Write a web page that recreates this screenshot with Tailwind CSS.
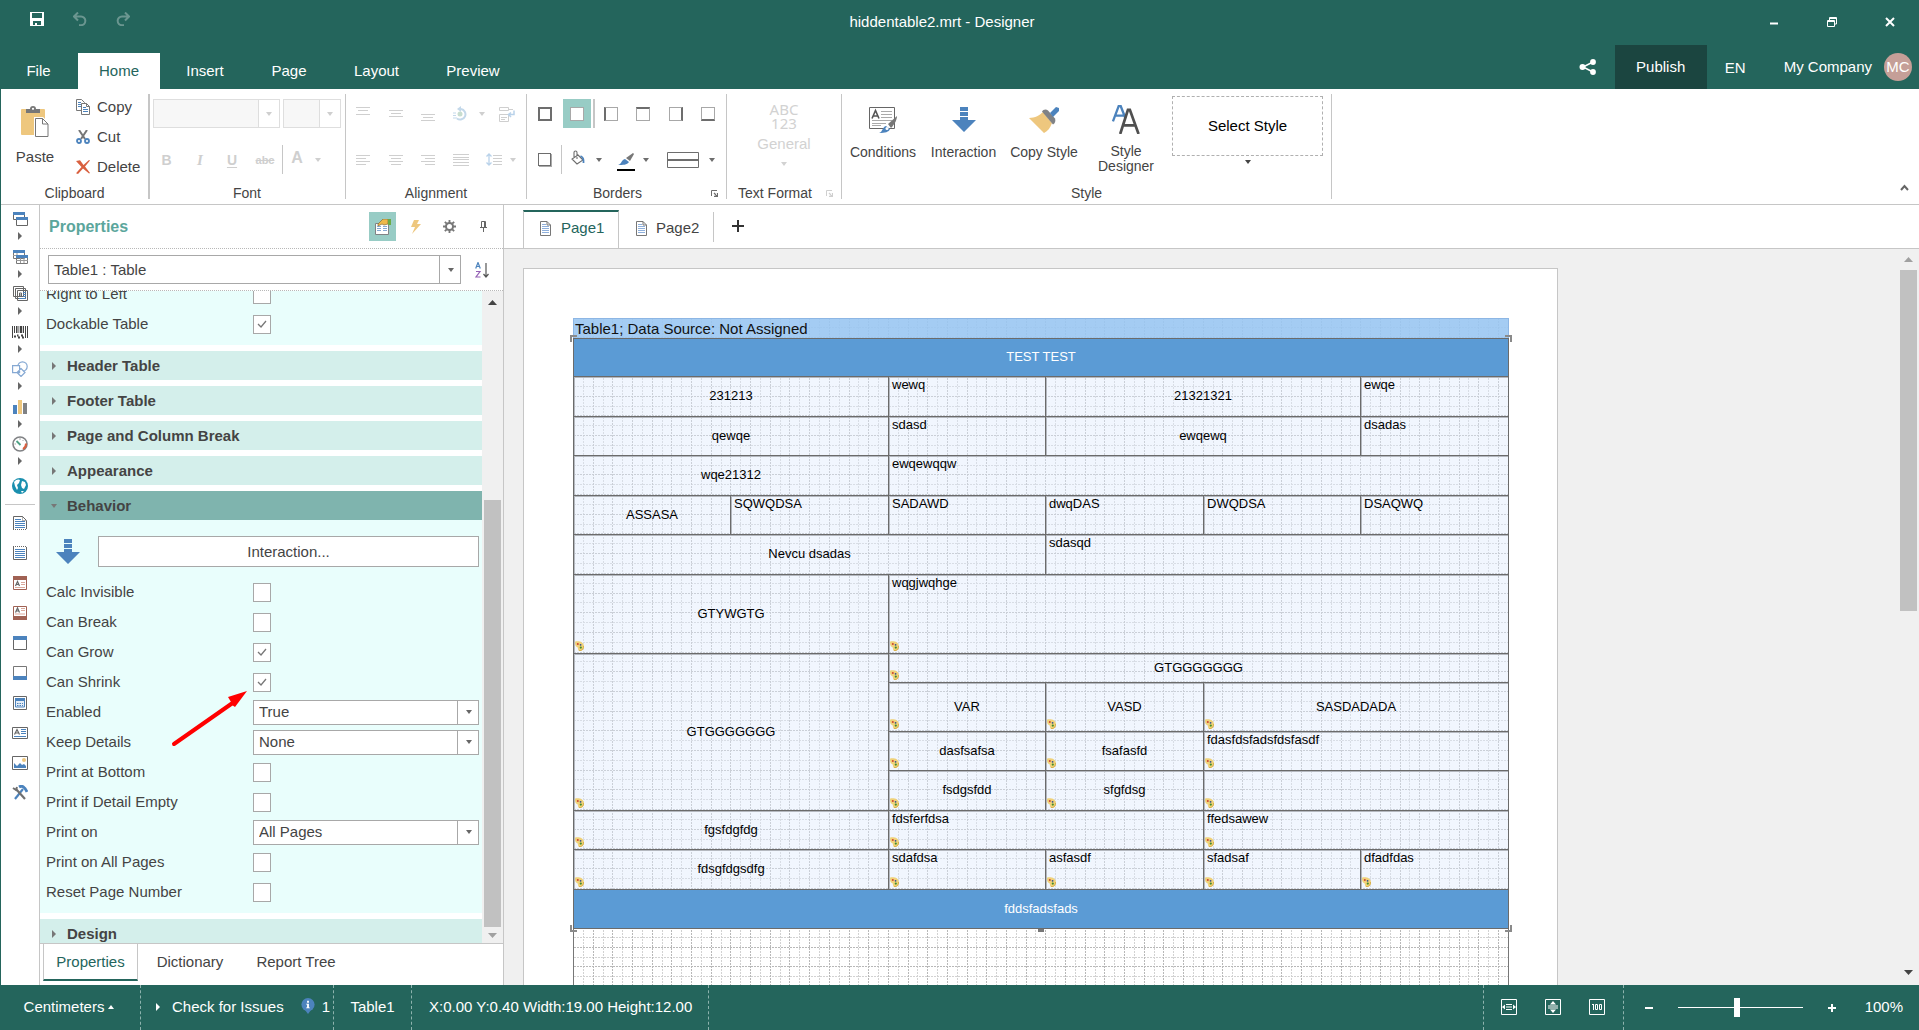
<!DOCTYPE html>
<html lang="en">
<head>
<meta charset="utf-8">
<meta name="viewport" content="width=device-width, initial-scale=1">
<title>hiddentable2.mrt - Designer</title>
<script src="https://cdn.jsdelivr.net/npm/@tailwindcss/browser@4"></script>
</head>
<body class="flex h-screen flex-col overflow-hidden border-l border-[#24655c] bg-white font-['Liberation_Sans',Arial,sans-serif] text-[15px] leading-[18px] whitespace-nowrap text-[#444]">

<svg class="hidden">
  <symbol id="caret" viewBox="0 0 6 4"><path d="M0 0h6L3 4z" fill="currentColor"/></symbol>
  <symbol id="right" viewBox="0 0 4 8"><path d="M0 0l4 4-4 4z" fill="currentColor"/></symbol>
  <symbol id="check" viewBox="0 0 10 8"><path d="M1 4l3 3 5-6" fill="none" stroke="#777" stroke-width="1.3"/></symbol>
  <symbol id="doc" viewBox="0 0 11 15"><path d="M.5.5h6.500l3.500 3.500v10.500H.5z" fill="#fff" stroke="#777"/><path d="M7 .5V4h3.500" fill="none" stroke="#777"/><path d="M2 5.500h7M2 7.500h7M2 9.500h7M2 11.500h7M2 3.500h4" stroke="#8fb0dc"/></symbol>
  <symbol id="down" viewBox="0 0 24 25"><path d="M8 0h8v4H8zM8 5h8v4H8zM8 10h8v3h8L12 25 0 13h8z" fill="#4c83bd"/></symbol>
  <symbol id="launcher" viewBox="0 0 7 7"><path d="M.5 6V.5H6" fill="none" stroke="currentColor"/><path d="M3 3l3 3M6.500 3v3.500H3" fill="none" stroke="currentColor" stroke-width="1.300"/></symbol>
  <symbol id="cond" viewBox="0 0 9 10"><path d="M.5.3C4-.3 9 .5 9 5.500 9 8.500 7 10 4.500 10 2.500 10 3.500 6.500 2 6 0 5.500-.5 1 .5.3z" fill="#f0d27a"/><path d="M4 9.600c3 .4 4.600-1.600 4.600-4.600" fill="none" stroke="#d3a83f" stroke-width=".8"/><circle cx="2.800" cy="3" r="1" fill="#d0452f"/><circle cx="5.600" cy="3.800" r=".9" fill="#34508e"/><circle cx="5.800" cy="6.600" r="1.100" fill="#3f8b2c"/></symbol>
</svg>

<header class="bg-[#24655c] text-white">
  <div class="grid h-[45px] grid-cols-[1fr_auto_1fr] items-center pb-2">
    <div class="flex gap-[29px] pl-[29px]">
      <button aria-label="Save"><svg class="h-3.5 w-3.5" viewBox="0 0 14 14"><path d="M0 0h14v14H0zM2 1v5h10V1zM3 9v4h2v-2h2v2h4V9z" fill="#fff" fill-rule="evenodd"/></svg></button>
      <button aria-label="Undo"><svg class="h-3.5 w-3.5 text-[#6b9690]" viewBox="0 0 14 14" fill="none" stroke="currentColor" stroke-width="2"><path d="M5 .5L1 4.500l4 4M1.500 4.500H8a4.300 4.300 0 0 1 0 8.700H6"/></svg></button>
      <button aria-label="Redo"><svg class="h-3.5 w-3.5 text-[#6b9690]" viewBox="0 0 14 14" fill="none" stroke="currentColor" stroke-width="2"><path d="M9 .5l4 4-4 4M12.500 4.500H6a4.300 4.300 0 0 0 0 8.700h2"/></svg></button>
    </div>
    <h1 class="pt-1.5 pr-9">hiddentable2.mrt - Designer</h1>
    <div class="flex items-center justify-end gap-12 pt-1.5 pr-6">
      <button aria-label="Minimize"><svg class="h-2.5 w-2.5" viewBox="0 0 10 10"><path d="M1 6.500h8" stroke="#fff" stroke-width="2"/></svg></button>
      <button aria-label="Restore"><svg class="h-2.5 w-2.5" viewBox="0 0 10 10" fill="none" stroke="#fff"><path d="M.5 3.500h7v6h-7zM2.500 3V.5h7V7H8M.5 4.500h7M2.500 1.500h7"/></svg></button>
      <button aria-label="Close"><svg class="h-2.5 w-2.5" viewBox="0 0 10 10"><path d="M1 1l8 8M9 1L1 9" stroke="#fff" stroke-width="2"/></svg></button>
    </div>
  </div>
  <div class="flex h-11 justify-between">
    <nav class="flex items-end">
      <a href="#" class="flex h-9 w-[77px] items-center justify-center pr-0.5">File</a>
      <a href="#" class="flex h-9 w-[82px] items-center justify-center bg-white text-[#24655c]">Home</a>
      <a href="#" class="flex h-9 w-[90px] items-center justify-center">Insert</a>
      <a href="#" class="flex h-9 w-[78px] items-center justify-center">Page</a>
      <a href="#" class="flex h-9 w-[97px] items-center justify-center">Layout</a>
      <a href="#" class="flex h-9 w-[96px] items-center justify-center">Preview</a>
    </nav>
    <div class="flex items-center pr-[7px]">
      <button aria-label="Share" class="mr-[18px]"><svg class="h-4 w-[18px]" viewBox="0 0 18 16"><path d="M14 3L4 8l10 5" fill="none" stroke="#fff" stroke-width="1.500"/><circle cx="14" cy="3" r="2.900" fill="#fff"/><circle cx="3.500" cy="8" r="3" fill="#fff"/><circle cx="14" cy="13" r="2.900" fill="#fff"/></svg></button>
      <button class="h-full w-[92px] bg-[#1b4540]">Publish</button>
      <button class="w-[57px] pt-0.5">EN</button>
      <a href="#" class="ml-5">My Company</a>
      <span class="ml-3 flex h-7 w-7 items-center justify-center rounded-full bg-[#c59f98]">MC</span>
    </div>
  </div>
</header>

<section class="flex h-[116px] shrink-0 border-b border-[#c6c6c6] text-sm leading-4" aria-label="Ribbon">
  <!-- Clipboard -->
  <div class="my-[5px] flex w-[149px] flex-col justify-between border-r-2 border-[#c6c6c6]">
    <div class="flex h-[92px] pt-0.5 text-[15px]">
      <button class="flex w-[68px] flex-col items-center pt-2.5">
        <svg class="mb-3 h-[31px] w-7" viewBox="0 0 28 31"><rect y="3" width="24" height="26" rx="1" fill="#eec77e"/><path d="M5 3h4a3 3 0 0 1 6 0h4v4H5z" fill="#777"/><circle cx="12" cy="2.800" r="1.100" fill="#fff"/><path d="M13 11h9l6 6v14H13z" fill="#fff"/><path d="M14.500 12.500h7l5.500 5.500v12.500H14.500z" fill="#fff" stroke="#777"/><path d="M21.500 12.500V18H27" fill="none" stroke="#777"/></svg>
        Paste</button>
      <div class="flex flex-col pl-[7px]">
        <button class="flex h-[31px] items-center gap-[7px] pb-2"><svg class="h-4 w-3.5" viewBox="0 0 14 16"><path d="M.5.5h5l3 3v8H.5z" fill="#fff" stroke="#777"/><path d="M2 3.500h3M2 5.500h5M2 7.500h5" stroke="#4c83bd"/><path d="M5.500 4.500h5l3 3v8h-8z" fill="#fff" stroke="#777"/><path d="M10.500 4.500v3h3" fill="none" stroke="#777"/><path d="M7 8.500h3M7 10.500h5M7 12.500h5" stroke="#4c83bd"/></svg>Copy</button>
        <button class="flex h-[31px] items-center gap-[7px] pb-2"><svg class="h-3.5 w-3.5" viewBox="0 0 14 14"><path d="M3 0l6 9M11 0L5 9" stroke="#777" stroke-width="2"/><circle cx="3" cy="11" r="2" fill="none" stroke="#4c83bd" stroke-width="1.800"/><circle cx="11" cy="11" r="2" fill="none" stroke="#4c83bd" stroke-width="1.800"/></svg>Cut</button>
        <button class="flex h-[31px] items-center gap-[7px] pb-2"><svg class="h-3.5 w-3.5" viewBox="0 0 14 14"><path d="M0 1l4-.7L7.500 5 13 0l1 .6L9 6.500 14 13l-1 .6L7 8.500 2 14l-2-.8L5.500 7z" fill="#d9603f"/></svg>Delete</button>
      </div>
    </div>
    <div class="text-center leading-3">Clipboard</div>
  </div>
  <!-- Font -->
  <div class="my-[5px] flex w-[196px] flex-col justify-between border-r border-[#c6c6c6] pl-[3px]">
    <div class="flex flex-col gap-[17px] pt-[5px] text-[#cfcfcf]">
      <div class="flex gap-[3px]">
        <button aria-label="Font name" class="flex h-[29px] w-[127px] border border-[#dedede] bg-[#f7f7f7]"><span class="ml-auto flex h-full w-[21px] items-center justify-center border-l border-[#dedede] bg-white"><svg class="h-1 w-1.5"><use href="#caret"/></svg></span></button>
        <button aria-label="Font size" class="flex h-[29px] w-[58px] border border-[#dedede] bg-[#f7f7f7]"><span class="ml-auto flex h-full w-[21px] items-center justify-center border-l border-[#dedede] bg-white"><svg class="h-1 w-1.5"><use href="#caret"/></svg></span></button>
      </div>
      <div class="flex h-[29px] items-center">
        <button class="w-[27px] font-bold">B</button>
        <button class="w-10 font-['Liberation_Serif',serif] text-[15px] font-bold italic">I</button>
        <button class="w-6 font-bold underline underline-offset-2">U</button>
        <button class="w-[38px] pl-1 text-[11px] font-bold line-through">abc</button>
        <span class="h-full border-l border-[#c6c6c6]"></span>
        <button class="w-8 pr-1 pb-1 text-base font-bold">A</button>
        <svg class="h-1 w-1.5"><use href="#caret"/></svg>
      </div>
    </div>
    <div class="pr-1 text-center leading-3">Font</div>
  </div>
  <!-- Alignment -->
  <div class="my-[5px] flex w-[181px] flex-col justify-between border-r border-[#c6c6c6]">
    <div class="flex flex-col gap-[17px] pt-[5px] text-[#cfcfcf]">
      <div class="flex h-[29px] items-center pl-2.5">
        <button aria-label="Align top" class="w-[33px]"><svg class="h-4 w-3.5" viewBox="0 0 14 16" stroke="currentColor"><path d="M0 1.500h14M2 4.500h10M0 8.500h14"/></svg></button>
        <button aria-label="Align middle" class="w-8"><svg class="h-4 w-3.5" viewBox="0 0 14 16" stroke="currentColor"><path d="M0 4.500h14M2 7.500h10M0 10.500h14"/></svg></button>
        <button aria-label="Align bottom" class="w-8"><svg class="h-4 w-3.5" viewBox="0 0 14 16" stroke="currentColor"><path d="M0 8.500h14M2 11.500h10M0 14.500h14"/></svg></button>
        <button aria-label="Rotate" class="w-[26px]"><svg class="h-4 w-3.5" viewBox="0 0 14 16"><path d="M8 3a5.300 5.300 0 1 1-4 9.500" fill="none" stroke="#c3d8ea" stroke-width="2"/><path d="M4 3l4-3v6z" fill="#c3d8ea"/><circle cx="7" cy="8" r="2.500" fill="#c8ddcf"/><path d="M0 7h3M0 9.500h3M0 12h4" stroke="#c3d8ea"/></svg></button>
        <svg class="h-1 w-1.5"><use href="#caret"/></svg>
        <button aria-label="Wrap text" class="ml-3.5"><svg class="h-4 w-4" viewBox="0 0 16 16" fill="none" stroke="#cfcfcf"><path d="M.5 1.500h9v3h-9zM.5 8.500h9v7h-9z"/><path d="M2 11.500h6M2 13.500h4M10 3.500h4"/><path d="M15 4.500v4h-5m2-2l-2.500 2 2.500 2.500" stroke="#b9d2ea" stroke-width="1.500"/></svg></button>
      </div>
      <div class="flex h-[29px] items-center pl-2.5">
        <button aria-label="Align left" class="w-[33px]"><svg class="h-3 w-3.5" viewBox="0 0 14 12" stroke="currentColor"><path d="M0 1.500h14M0 4.500h10M0 7.500h14M0 10.500h10"/></svg></button>
        <button aria-label="Align center" class="w-8"><svg class="h-3 w-3.5" viewBox="0 0 14 12" stroke="currentColor"><path d="M0 1.500h14M2 4.500h10M0 7.500h14M2 10.500h10"/></svg></button>
        <button aria-label="Align right" class="w-8"><svg class="h-3 w-3.5" viewBox="0 0 14 12" stroke="currentColor"><path d="M0 1.500h14M4 4.500h10M0 7.500h14M4 10.500h10"/></svg></button>
        <button aria-label="Justify" class="w-[33px]"><svg class="h-3 w-4" viewBox="0 0 16 12" stroke="currentColor"><path d="M0 .5h16M0 3.500h16M0 5.500h16M0 8.500h16M0 11.500h16"/></svg></button>
        <button aria-label="Line spacing" class="mr-2"><svg class="h-[13px] w-4" viewBox="0 0 16 13" fill="none"><path d="M3 1v11M.5 3.500L3 1l2.500 2.500M.5 9.500L3 12l2.500-2.500" stroke="#b9d2ea" stroke-width="1.300"/><path d="M7 2.500h9M7 5.500h9M7 8.500h9M7 11.500h9" stroke="#cfcfcf"/></svg></button>
        <svg class="h-1 w-1.5"><use href="#caret"/></svg>
      </div>
    </div>
    <div class="text-center leading-3">Alignment</div>
  </div>
  <!-- Borders -->
  <div class="relative my-[5px] flex w-[200px] flex-col justify-between border-r border-[#c6c6c6]">
    <div class="flex flex-col gap-[17px] pt-[5px] text-[#6d6d6d]">
      <div class="flex h-[29px] items-center">
        <button aria-label="All borders" class="ml-[11px] h-3.5 w-3.5 border-2 border-[#6d6d6d]"></button>
        <button aria-label="No border" aria-pressed="true" class="ml-[11px] flex h-[29px] w-7 items-center justify-center bg-[#98ccc5]"><span class="h-3.5 w-3.5 border border-[#a8a8a8] bg-white"></span></button>
        <span class="ml-0.5 h-full border-l-2 border-[#c6c6c6]"></span>
        <button aria-label="Left border" class="ml-[9px] h-3.5 w-3.5 border border-l-2 border-[#a8a8a8] border-l-[#6d6d6d]"></button>
        <button aria-label="Top border" class="ml-[18px] h-3.5 w-3.5 border border-t-2 border-[#a8a8a8] border-t-[#6d6d6d]"></button>
        <button aria-label="Right border" class="ml-[19px] h-3.5 w-3.5 border border-r-2 border-[#a8a8a8] border-r-[#6d6d6d]"></button>
        <button aria-label="Bottom border" class="ml-[18px] h-3.5 w-3.5 border border-b-2 border-[#a8a8a8] border-b-[#6d6d6d]"></button>
      </div>
      <div class="flex h-[29px] items-center">
        <button aria-label="Shadow" class="ml-[11px] h-[13px] w-[13px] border border-[#6d6d6d] shadow-[1px_1px_0_#aaa]"></button>
        <span class="ml-[10px] h-full border-l border-[#c6c6c6]"></span>
        <button aria-label="Fill" class="mr-2.5 mb-1 ml-2"><svg class="h-4 w-4" viewBox="0 0 16 16" fill="none"><path d="M8 5l5 5-6 4-5-5zM4 7V2.500c0-2 3-2 3 0V9" stroke="#6d6d6d" stroke-width="1.100"/><path d="M10.500 6c2.500 1 3.500 2.500 3 7" stroke="#4c83bd" stroke-width="1.800"/></svg></button>
        <svg class="h-1 w-1.5"><use href="#caret"/></svg>
        <button aria-label="Border color" class="mr-2 ml-[15px] border-b-2 border-black pt-1 pb-1"><svg class="h-3 w-[18px]" viewBox="0 0 18 12"><path d="M1 12C5 11 4 7 8 6l4 3c-2 3-6 3-11 3z" fill="#4c83bd"/><path d="M9 5l7-5 1 1-4 7z" fill="#777"/></svg></button>
        <svg class="h-1 w-1.5"><use href="#caret"/></svg>
        <button aria-label="Border style" class="mr-[10px] ml-[18px]"><svg class="h-4 w-8" viewBox="0 0 32 16"><path d="M.5.5h31v15H.5z" fill="none" stroke="currentColor"/><path d="M0 8h32" stroke="currentColor" stroke-width="2"/></svg></button>
        <svg class="h-1 w-1.5"><use href="#caret"/></svg>
      </div>
    </div>
    <div class="pr-[18px] text-center leading-3">Borders</div>
    <button aria-label="Borders dialog" class="absolute right-2 bottom-0.5 text-[#6d6d6d]"><svg class="h-[7px] w-[7px]"><use href="#launcher"/></svg></button>
  </div>
  <!-- Text format -->
  <div class="relative my-[5px] flex w-[115px] flex-col justify-between border-r border-[#c6c6c6]">
    <button class="flex flex-col items-center pt-2 text-[#d2d2d2]">
      <span class="font-['Noto_Sans',sans-serif] text-[15px] leading-[14px]">ABC<br>123</span>
      <span class="mt-1.5 text-[15px] leading-4">General</span>
      <svg class="mt-2.5 h-1 w-1.5"><use href="#caret"/></svg>
    </button>
    <div class="pr-[18px] text-center leading-3">Text Format</div>
    <button aria-label="Text format dialog" class="absolute right-2 bottom-0.5 text-[#cfcfcf]"><svg class="h-[7px] w-[7px]"><use href="#launcher"/></svg></button>
  </div>
  <!-- Style -->
  <div class="my-[5px] flex w-[490px] flex-col justify-between border-r border-[#c6c6c6]">
    <div class="flex">
      <button class="flex h-20 w-[82px] flex-col items-center pt-[13px]">
        <svg class="mb-[11px] h-[26px] w-7" viewBox="0 0 28 26"><path d="M.5.5h25v21H.5z" fill="#fff" stroke="#666"/><path d="M12 4.500h11M12 7.500h11M12 10.500h11M3 13.500h20M3 16.500h14M3 18.500h9" stroke="#aaa"/><path d="M3 11.500L6.500 3.500 10 11.500M4.200 9h4.600" fill="none" stroke="#555" stroke-width="1.600"/><path d="M10 26c4-1 3-6 7-7l4 3c-1 3-5 4-11 4z" fill="#4c83bd"/><path d="M19 17l9-8c0 3-2 8-6 12z" fill="#777"/><circle cx="18" cy="21.500" r="1.500" fill="#fff"/></svg>Conditions</button>
      <button class="flex h-20 w-[79px] flex-col items-center pt-[13px]"><svg class="mb-3 h-[25px] w-6"><use href="#down"/></svg>Interaction</button>
      <button class="flex h-20 w-[82px] flex-col items-center pt-[13px]">
        <svg class="mb-[11px] h-[26px] w-[30px]" viewBox="0 0 30 26"><path d="M0 11c6 0 11-3 14-6l9 11c-2 5-4 8-8 10z" fill="#eec77e"/><path d="M13 4.500c1-2 4-3 6-1l7 8c1 2 0 5-2 6z" fill="#808285"/><path d="M21 6l6-6 3 1v3l-6 6z" fill="#4c83bd"/></svg>Copy Style</button>
      <button class="flex h-20 w-[82px] flex-col items-center pt-[11px] leading-[15px]">
        <svg class="mb-2.5 h-[30px] w-[30px]" viewBox="0 0 30 30" fill="none"><path d="M1.500 17L7.500 1h2l5 13M4 11h9" stroke="#4c83bd" stroke-width="2.400"/><path d="M9 30l8-25h2l9 25M12 21h13" stroke="#505050" stroke-width="2.800"/></svg>Style<br>Designer</button>
      <div class="flex flex-col items-center gap-1 pt-0.5 pl-[5px]">
        <button class="h-[60px] w-[151px] border border-dashed border-[#b0b0b0] text-[15px] text-black">Select Style</button>
        <svg class="h-1 w-1.5"><use href="#caret"/></svg>
      </div>
    </div>
    <div class="text-center leading-3">Style</div>
  </div>
  <button aria-label="Collapse ribbon" class="mt-auto mr-[10px] mb-3 ml-auto"><svg class="h-2 w-[9px]" viewBox="0 0 9 8"><path d="M1 6l3.500-4L8 6" fill="none" stroke="#666" stroke-width="2"/></svg></button>
</section>

<div class="flex min-h-0 flex-1">
  <!-- Toolbox -->
  <aside class="w-[39px] shrink-0 border-r border-[#c6c6c6] text-[#666]" aria-label="Toolbox">
    <div class="mt-1.5 grid h-[263px] grid-rows-7 [&>button]:flex [&>button]:flex-col [&>button]:items-center [&>button]:gap-[5px]">
      <button aria-label="Bands"><svg class="h-4 w-4" viewBox="0 0 16 16"><path d="M1.500 2.500h11v6h-11z" fill="#fff" stroke="#666"/><path d="M4.500 7.500h11v7h-11z" fill="#fff" stroke="#666"/><path d="M1 1h12v3H1zM4 6h12v3H4z" fill="#4c83bd"/></svg><svg class="h-2 w-1"><use href="#right"/></svg></button>
      <button aria-label="Cross bands"><svg class="h-4 w-4" viewBox="0 0 16 16"><path d="M1.500 2.500h11v7h-11zM4.500 7.500h11v7h-11z" fill="#fff" stroke="#777"/><path d="M1 6.500h8M5 3v6M4 11.500h12M8.500 8v6M12 8v6" stroke="#999"/><path d="M1 1h12v3H1zM4 6h12v3H4z" fill="#4c83bd"/></svg><svg class="h-2 w-1"><use href="#right"/></svg></button>
      <button aria-label="Components"><svg class="h-4 w-4" viewBox="0 0 16 16" fill="#fff" stroke="#666"><path d="M1.500.500h10v10h-10zM3.500 2.500h10v10h-10zM5.500 4.500h10v10h-10z"/><path d="M11 6.500h3M11 8.500h3M11 10.500h3M7 12.500h7" stroke="#4c83bd"/><path d="M7.500 11V7h2v4M7.500 9h2" fill="none"/></svg><svg class="h-2 w-1"><use href="#right"/></svg></button>
      <button aria-label="Barcodes"><svg class="h-4 w-4" viewBox="0 0 16 14" stroke="#444"><path d="M.5 1v12M2.500 1v7M4.500 1v7M6 1v7M11.500 1v7M13.500 1v12M15.500 1v12"/><path d="M9 1v7" stroke-width="2.500"/><path d="M2 11.500h2M5 10.500h1.500M6 12.500h2M9 10.500h2M10 12.500h2" stroke-width="2"/></svg><svg class="h-2 w-1"><use href="#right"/></svg></button>
      <button aria-label="Shapes"><svg class="h-4 w-4" viewBox="0 0 16 16" fill="#fff" stroke="#86a9d3" stroke-width="1.200"><circle cx="10.500" cy="5.500" r="4.700"/><path d="M.6 4.600h7v7h-7zM9 7.500l4 4-4 4-4-4z"/></svg><svg class="h-2 w-1"><use href="#right"/></svg></button>
      <button aria-label="Charts"><svg class="h-4 w-4" viewBox="0 0 16 16"><path d="M1 6h4v9H1z" fill="#4c83bd"/><path d="M6 1h4v14H6z" fill="#eec77e"/><path d="M11 4h4v11h-4z" fill="#808285"/></svg><svg class="h-2 w-1"><use href="#right"/></svg></button>
      <button aria-label="Gauges"><svg class="h-4 w-4" viewBox="0 0 16 16" fill="none"><circle cx="8" cy="8" r="7" fill="#fff" stroke="#808285" stroke-width="1.600"/><path d="M14 7.500A6 6 0 0 1 11 13" stroke="#d9603f" stroke-width="2"/><path d="M4.500 5L8.500 9" stroke="#4fa287" stroke-width="1.800"/><path d="M8 2v2M2.500 8h1.500M11.500 4l-1 1" stroke="#aaa"/></svg><svg class="h-2 w-1"><use href="#right"/></svg></button>
    </div>
    <div class="flex flex-col items-center [&>button]:flex [&>button]:h-[30px] [&>button]:items-center">
      <button aria-label="Map" class="-my-[3px]"><svg class="h-4 w-4" viewBox="0 0 16 16"><circle cx="8" cy="8" r="8" fill="#1a8fae"/><path d="M2 4c2-3 5-3 6-2L7 5 5 7l1 3-1 2-2-4zM10 3l3 1 1 3-2 4-2-1-1-3zM9 13l3 0-2 2z" fill="#fff"/></svg></button>
      <div class="mt-1.5 mb-[3px] w-[30px] border-t border-[#c6c6c6]"></div>
      <button aria-label="Report title"><svg class="h-4 w-4" viewBox="0 0 16 16"><path d="M1.500 14V1.500h9l4 4V14" fill="#fff" stroke="#666"/><path d="M10.500 1.500v4h4M1 14.500h14" fill="none" stroke="#666" stroke-dasharray="1 1"/><path d="M3 4.500h6M3 6.500h10M3 8.500h10M3 10.500h10M3 12.500h10" stroke="#4c83bd"/></svg></button>
      <button aria-label="Report summary"><svg class="h-4 w-4" viewBox="0 0 16 16"><path d="M1.500 2v12.500h13V2" fill="#fff" stroke="#666"/><path d="M1 1.500h14" stroke="#666" stroke-dasharray="1 1"/><path d="M3 4.500h10M3 6.500h10M3 8.500h10M3 10.500h10M3 12.500h10" stroke="#4c83bd"/></svg></button>
      <button aria-label="Page header"><svg class="h-4 w-4" viewBox="0 0 16 16"><path d="M1.500 1.500h13v13h-13z" fill="#fff" stroke="#a06153"/><path d="M1 1h14v4H1z" fill="#a06153"/><path d="M9 7.500h4M9 9.500h4M3 12.500h10" stroke="#dba99c"/><path d="M3.500 11L5.500 6.500 7.500 11M4 9.500h3" fill="none" stroke="#666" stroke-width="1.200"/></svg></button>
      <button aria-label="Page footer"><svg class="h-4 w-4" viewBox="0 0 16 16"><path d="M1.500 1.500h13v13h-13z" fill="#fff" stroke="#a06153"/><path d="M1 11h14v4H1z" fill="#a06153"/><path d="M9 3.500h4M9 5.500h4M3 9h10" stroke="#dba99c"/><path d="M3.500 7.500L5.500 3 7.500 7.500M4 6h3" fill="none" stroke="#666" stroke-width="1.200"/></svg></button>
      <button aria-label="Header"><svg class="h-4 w-4" viewBox="0 0 16 16"><path d="M1.500 1.500h13v13h-13z" fill="#fff" stroke="#666"/><path d="M1 1h14v4H1z" fill="#4c83bd"/></svg></button>
      <button aria-label="Footer"><svg class="h-4 w-4" viewBox="0 0 16 16"><path d="M1.500 1.500h13v13h-13z" fill="#fff" stroke="#777"/><path d="M1 11h14v4H1z" fill="#4c83bd"/></svg></button>
      <button aria-label="Data"><svg class="h-4 w-4" viewBox="0 0 16 16"><path d="M1.500 1.500h13v13h-13z" fill="#fff" stroke="#666"/><path d="M3.500 4h9v8h-9z" fill="#e4edf7" stroke="#4c83bd"/><path d="M3 3h10v3H3z" fill="#4c83bd"/><path d="M5 8.500h6M5 10.500h6" stroke="#4c83bd" stroke-dasharray="1.500 1"/></svg></button>
      <button aria-label="Text"><svg class="h-4 w-4" viewBox="0 0 16 16"><path d="M.5 2.500h15v11H.5z" fill="#fff" stroke="#666"/><path d="M9 4.500h5M9 6.500h5M9 8.500h5M2 11.500h12" stroke="#4c83bd"/><path d="M2.500 9.500L5 4.500 7.500 9.500M3.500 8h3" fill="none" stroke="#666" stroke-width="1.200"/></svg></button>
      <button aria-label="Image"><svg class="h-4 w-4" viewBox="0 0 16 16"><path d="M.5 1.500h15v13H.5z" fill="#fff" stroke="#666"/><circle cx="12" cy="5" r="2" fill="#eec77e"/><path d="M2 13V8l3 3 3-3 2 2 2-1 2 2v2z" fill="#4c83bd"/></svg></button>
      <button aria-label="Tools"><svg class="h-4 w-4" viewBox="0 0 16 16" fill="none"><path d="M11 4L3 14" stroke="#4c83bd" stroke-width="2.200"/><path d="M7 2c3-2 6 0 8 5" stroke="#4c83bd" stroke-width="2.800"/><path d="M4 4l9 10" stroke="#707070" stroke-width="2.200"/><path d="M1 3l3 2 1-3" stroke="#707070" stroke-width="2"/></svg></button>
    </div>
  </aside>

  <!-- Properties panel -->
  <section class="flex w-[464px] shrink-0 flex-col border-r border-[#c6c6c6]" aria-label="Properties">
    <div class="flex h-11 items-center border-b border-dotted border-[#b8b8b8] pr-[13px] pl-[9px]">
      <h2 class="mr-auto text-base font-bold text-[#5ba69c]">Properties</h2>
      <button aria-label="Properties list" class="mr-[15px] flex h-[29px] w-[27px] items-center justify-center bg-[#98ccc5]"><svg class="h-4 w-4" viewBox="0 0 16 16"><path d="M.5 4.500h13v11H.5z" fill="#fff" stroke="#808285"/><path d="M2 7.500h4M2 9.500h4M2 11.500h4M8 9.500h4M8 11.500h4M8 7.500h4" stroke="#86a9d3"/><path d="M3 5L8 0h5v5L9 6 7 5 3 7z" fill="#eeb94a" stroke="#866a35" stroke-width=".7"/><path d="M13 0h3v6h-3z" fill="#6cab45"/></svg></button>
      <button aria-label="Events" class="mr-[22px]"><svg class="h-3.5 w-2.5" viewBox="0 0 10 14"><path d="M3 0h5L6 4h4L1 14l3-7H0z" fill="#eec77e"/></svg></button>
      <button aria-label="Settings" class="mr-[21px]"><svg class="h-[13px] w-[13px]" viewBox="0 0 14 14" fill="none" stroke="#777"><circle cx="7" cy="7" r="3.800" stroke-width="2.200"/><path d="M7 0v3M7 11v3M0 7h3M11 7h3M2 2l2 2M10 10l2 2M12 2l-2 2M4 10l-2 2" stroke-width="2"/></svg></button>
      <button aria-label="Pin"><svg class="h-[11px] w-[13px]" viewBox="0 0 13 11" fill="none" stroke="#666"><path d="M4.500.5h4v6h-4zM3 6.500h7M6.500 7v4M7.500 1v5"/></svg></button>
    </div>
    <div class="flex h-[42px] items-center border-b border-dotted border-[#b8b8b8] pl-2">
      <div class="relative h-[29px] w-[413px]">
        <select aria-label="Component" class="h-full w-full appearance-none border border-[#a8a8a8] bg-white pl-[5px]"><option>Table1 : Table</option></select>
        <span class="pointer-events-none absolute inset-y-0 right-0 flex w-[22px] items-center justify-center border-l border-[#a8a8a8] text-[#666]"><svg class="h-1 w-1.5"><use href="#caret"/></svg></span>
      </div>
      <button aria-label="Sort" class="ml-3.5"><svg class="h-4 w-3.5" viewBox="0 0 14 16" fill="none"><path d="M.7 6.500L3 .5l2.300 6M1.500 4.500h3" stroke="#4c83bd" stroke-width="1.200"/><path d="M1 9.500h4l-4 5.500h4.500" stroke="#9461b5" stroke-width="1.200"/><path d="M11 1v14M8.500 12l2.500 3 2.500-3" stroke="#555" stroke-width="1.200"/></svg></button>
    </div>

    <div class="flex min-h-0 flex-1">
      <div class="min-w-0 flex-1 overflow-hidden">
        <div class="-mt-3 flex flex-col gap-1.5 [&_h3]:flex [&_h3]:h-[29px] [&_h3]:items-center [&_h3]:pl-3 [&_h3]:font-bold [&_h3_svg]:mr-[11px] [&_h3_svg]:text-[#777] [&_input]:col-start-1 [&_input]:row-start-1 [&_input]:h-[19px] [&_input]:w-[18px] [&_input]:appearance-none [&_input]:border [&_input]:border-[#a8a8a8] [&_input]:bg-white [&_label]:w-[207px] [&_select]:h-[25px] [&_select]:w-full [&_select]:appearance-none [&_select]:border [&_select]:border-[#a8a8a8] [&_select]:bg-white [&_select]:pl-[5px]">
          <div class="bg-[#e9fefc] pb-1.5 pl-1.5">
            <div class="flex h-[30px] items-center"><label for="rtl">Right to Left</label><input id="rtl" type="checkbox"></div>
            <div class="flex h-[30px] items-center"><label for="dock">Dockable Table</label><span class="grid place-items-center"><input id="dock" type="checkbox" checked><svg class="pointer-events-none col-start-1 row-start-1 h-2 w-2.5"><use href="#check"/></svg></span></div>
          </div>
          <h3 class="bg-[#d4efeb]"><svg class="h-2 w-1"><use href="#right"/></svg>Header Table</h3>
          <h3 class="bg-[#d4efeb]"><svg class="h-2 w-1"><use href="#right"/></svg>Footer Table</h3>
          <h3 class="bg-[#d4efeb]"><svg class="h-2 w-1"><use href="#right"/></svg>Page and Column Break</h3>
          <h3 class="bg-[#d4efeb]"><svg class="h-2 w-1"><use href="#right"/></svg>Appearance</h3>
          <div>
            <h3 class="bg-[#7fb4ae]"><svg class="-ml-px h-1 w-1.5"><use href="#caret"/></svg><span class="-ml-px">Behavior</span></h3>
            <div class="bg-[#e9fefc] pr-[3px] pb-1.5 pl-1.5">
              <div class="flex h-[57px] items-center pt-1.5 pl-[10px]">
                <svg class="mr-[18px] h-[25px] w-6"><use href="#down"/></svg>
                <button class="h-[31px] flex-1 border border-[#a8a8a8] bg-white">Interaction...</button>
              </div>
              <div class="flex h-[30px] items-center"><label for="calc">Calc Invisible</label><input id="calc" type="checkbox"></div>
              <div class="flex h-[30px] items-center"><label for="brk">Can Break</label><input id="brk" type="checkbox"></div>
              <div class="flex h-[30px] items-center"><label for="grow">Can Grow</label><span class="grid place-items-center"><input id="grow" type="checkbox" checked><svg class="pointer-events-none col-start-1 row-start-1 h-2 w-2.5"><use href="#check"/></svg></span></div>
              <div class="relative flex h-[30px] items-center"><label for="shrink">Can Shrink</label><span class="grid place-items-center"><input id="shrink" type="checkbox" checked><svg class="pointer-events-none col-start-1 row-start-1 h-2 w-2.5"><use href="#check"/></svg></span>
                <svg class="pointer-events-none absolute top-6 left-[124px] z-10 h-[60px] w-20" viewBox="0 0 80 60"><path d="M4 53L64 11" stroke="#f00" stroke-width="4" stroke-linecap="round"/><path d="M77 0L58 6l3 5 1 3 3 2z" fill="#f00"/></svg>
              </div>
              <div class="flex h-[30px] items-center"><label for="en">Enabled</label><span class="relative flex-1"><select id="en"><option>True</option></select><span class="pointer-events-none absolute inset-y-0 right-0 flex w-[22px] items-center justify-center border-l border-[#a8a8a8] text-[#666]"><svg class="h-1 w-1.5"><use href="#caret"/></svg></span></span></div>
              <div class="flex h-[30px] items-center"><label for="keep">Keep Details</label><span class="relative flex-1"><select id="keep"><option>None</option></select><span class="pointer-events-none absolute inset-y-0 right-0 flex w-[22px] items-center justify-center border-l border-[#a8a8a8] text-[#666]"><svg class="h-1 w-1.5"><use href="#caret"/></svg></span></span></div>
              <div class="flex h-[30px] items-center"><label for="bottom">Print at Bottom</label><input id="bottom" type="checkbox"></div>
              <div class="flex h-[30px] items-center"><label for="empty">Print if Detail Empty</label><input id="empty" type="checkbox"></div>
              <div class="flex h-[30px] items-center"><label for="on">Print on</label><span class="relative flex-1"><select id="on"><option>All Pages</option></select><span class="pointer-events-none absolute inset-y-0 right-0 flex w-[22px] items-center justify-center border-l border-[#a8a8a8] text-[#666]"><svg class="h-1 w-1.5"><use href="#caret"/></svg></span></span></div>
              <div class="flex h-[30px] items-center"><label for="all">Print on All Pages</label><input id="all" type="checkbox"></div>
              <div class="flex h-[30px] items-center"><label for="reset">Reset Page Number</label><input id="reset" type="checkbox"></div>
            </div>
          </div>
          <h3 class="bg-[#d4efeb]"><svg class="h-2 w-1"><use href="#right"/></svg>Design</h3>
        </div>
      </div>
      <div class="flex w-[21px] flex-col items-center bg-[#f0f0f0] pt-[9px] pb-[5px]">
        <svg class="h-[5px] w-[9px] rotate-180 text-[#444]" viewBox="0 0 9 5"><path d="M0 0h9L4.500 5z" fill="currentColor"/></svg>
        <div class="mt-auto mb-1.5 h-[427px] w-[17px] bg-[#c1c1c1]"></div>
        <svg class="h-[5px] w-[9px] text-[#a0a0a0]" viewBox="0 0 9 5"><path d="M0 0h9L4.500 5z" fill="currentColor"/></svg>
      </div>
    </div>

    <nav class="flex h-[42px] items-start border-t border-[#c6c6c6] pl-[3px]">
      <a href="#" class="flex h-[37px] w-[95px] items-center justify-center border-x border-b-2 border-[#c6c6c6] border-b-[#24655c] text-[#24655c]">Properties</a>
      <a href="#" class="flex h-[35px] w-[104px] items-center justify-center">Dictionary</a>
      <a href="#" class="flex h-[35px] w-[108px] items-center justify-center">Report Tree</a>
    </nav>
  </section>

  <!-- Report canvas -->
  <main class="flex min-w-0 flex-1 flex-col">
    <nav class="flex h-11 shrink-0 items-end border-b border-[#c6c6c6] pl-[19px]">
      <a href="#" class="flex h-[38px] w-24 items-center border-x border-t-2 border-[#c6c6c6] border-t-[#24655c] pb-1 pl-4 text-[#24655c]"><svg class="mr-2.5 h-[15px] w-[11px]"><use href="#doc"/></svg>Page1</a>
      <a href="#" class="mb-1.5 flex h-[30px] w-[95px] items-center border-r border-[#c6c6c6] pt-0.5 pl-[17px]"><svg class="mr-[9px] h-[15px] w-[11px]"><use href="#doc"/></svg>Page2</a>
      <button aria-label="Add page" class="mb-4 ml-[18px]"><svg class="h-3 w-3" viewBox="0 0 12 12"><path d="M6 0v12M0 6h12" stroke="#333" stroke-width="2"/></svg></button>
    </nav>
    <div class="flex min-h-0 flex-1 overflow-hidden bg-[#f0f0f0] pt-[19px] pl-[19px]">
      <div class="w-[1035px] shrink-0 border border-b-0 border-[#c6c6c6] bg-white pt-[49px] pl-[49px]">
        <div class="relative h-full w-[936px] border-x border-[#777]">
          <svg class="pointer-events-none absolute inset-0 h-full w-full" aria-hidden="true"><path id="minor" stroke="#d2d2d2" stroke-dasharray="2 1" fill="none"/><path id="major" stroke="#b8b8b8" stroke-dasharray="2 1" fill="none"/></svg>
          <div class="relative -mx-px">
            <div class="h-5 border border-b-0 border-[#8db6e4] bg-[#9ac6f2]/90 pl-px leading-[20px] text-[#111]">Table1; Data Source: Not Assigned</div>
            <table class="w-full table-fixed border-collapse text-center text-[13px] leading-[15px] text-black [&_.f]:absolute [&_.f]:bottom-0.5 [&_.f]:left-px [&_.f]:h-2.5 [&_.f]:w-[9px] [&_.t]:pl-[3px] [&_.t]:text-left [&_.t]:align-top [&_td]:relative [&_td]:border [&_td]:border-[#6b6b6b] [&_td]:bg-[#dfeafd]/45 [&_td]:pb-0.5 [&_td]:shadow-[inset_1px_1px_0_#b4b8bf]">
              <colgroup><col class="w-[157px]"><col class="w-[158px]"><col class="w-[157px]"><col class="w-[158px]"><col class="w-[157px]"><col></colgroup>
              <tbody>
                <tr class="h-[38px] text-white"><td colspan="6" class="bg-[#5b9bd5]! shadow-none!">TEST TEST</td></tr>
                <tr class="h-10"><td colspan="2">231213</td><td class="t">wewq</td><td colspan="2">21321321</td><td class="t">ewqe</td></tr>
                <tr class="h-[39px]"><td colspan="2">qewqe</td><td class="t">sdasd</td><td colspan="2">ewqewq</td><td class="t">dsadas</td></tr>
                <tr class="h-10"><td colspan="2">wqe21312</td><td colspan="4" class="t">ewqewqqw</td></tr>
                <tr class="h-[39px]"><td>ASSASA</td><td class="t">SQWQDSA</td><td class="t">SADAWD</td><td class="t">dwqDAS</td><td class="t">DWQDSA</td><td class="t">DSAQWQ</td></tr>
                <tr class="h-10"><td colspan="3">Nevcu dsadas</td><td colspan="3" class="t">sdasqd</td></tr>
                <tr class="h-[79px]"><td colspan="2">GTYWGTG<svg class="f"><use href="#cond"/></svg></td><td colspan="4" class="t">wqgjwqhge<svg class="f"><use href="#cond"/></svg></td></tr>
                <tr class="h-[29px]"><td colspan="2" rowspan="4">GTGGGGGGG<svg class="f"><use href="#cond"/></svg></td><td colspan="4">GTGGGGGGG<svg class="f"><use href="#cond"/></svg></td></tr>
                <tr class="h-[49px]"><td>VAR<svg class="f"><use href="#cond"/></svg></td><td>VASD<svg class="f"><use href="#cond"/></svg></td><td colspan="2">SASDADADA<svg class="f"><use href="#cond"/></svg></td></tr>
                <tr class="h-[39px]"><td>dasfsafsa<svg class="f"><use href="#cond"/></svg></td><td>fsafasfd<svg class="f"><use href="#cond"/></svg></td><td colspan="2" class="t">fdasfdsfadsfdsfasdf<svg class="f"><use href="#cond"/></svg></td></tr>
                <tr class="h-10"><td>fsdgsfdd<svg class="f"><use href="#cond"/></svg></td><td>sfgfdsg<svg class="f"><use href="#cond"/></svg></td><td colspan="2"><svg class="f"><use href="#cond"/></svg></td></tr>
                <tr class="h-[39px]"><td colspan="2">fgsfdgfdg<svg class="f"><use href="#cond"/></svg></td><td colspan="2" class="t">fdsferfdsa<svg class="f"><use href="#cond"/></svg></td><td colspan="2" class="t">ffedsawew<svg class="f"><use href="#cond"/></svg></td></tr>
                <tr class="h-10"><td colspan="2">fdsgfdgsdfg<svg class="f"><use href="#cond"/></svg></td><td class="t">sdafdsa<svg class="f"><use href="#cond"/></svg></td><td class="t">asfasdf<svg class="f"><use href="#cond"/></svg></td><td class="t">sfadsaf<svg class="f"><use href="#cond"/></svg></td><td class="t">dfadfdas<svg class="f"><use href="#cond"/></svg></td></tr>
                <tr class="h-[39px] text-white"><td colspan="6" class="bg-[#5b9bd5]! shadow-none!">fddsfadsfads</td></tr>
              </tbody>
            </table>
            <!-- Selection handles -->
            <span class="absolute top-[17px] -left-[3px] h-[7px] w-[7px] border-t-2 border-l-2 border-[#8a8a8a]"></span>
            <span class="absolute top-[17px] -right-[3px] h-[7px] w-[7px] border-t-2 border-r-2 border-[#8a8a8a]"></span>
            <span class="absolute -bottom-[3px] -left-[3px] h-[7px] w-[7px] border-b-2 border-l-2 border-[#8a8a8a]"></span>
            <span class="absolute -right-[3px] -bottom-[3px] h-[7px] w-[7px] border-r-2 border-b-2 border-[#8a8a8a]"></span>
            <span class="absolute -bottom-[3px] left-1/2 h-[3px] w-1.5 -translate-x-1/2 bg-[#777]"></span>
          </div>
        </div>
      </div>
      <div class="-mt-[11px] mr-0.5 mb-[10px] ml-auto flex w-[17px] flex-col items-center">
        <svg class="h-[5px] w-[9px] rotate-180 text-[#a0a0a0]" viewBox="0 0 9 5"><path d="M0 0h9L4.500 5z" fill="currentColor"/></svg>
        <div class="mt-2 h-[341px] w-full bg-[#c1c1c1]"></div>
        <svg class="mt-auto h-[5px] w-[9px] text-[#444]" viewBox="0 0 9 5"><path d="M0 0h9L4.500 5z" fill="currentColor"/></svg>
      </div>
    </div>
  </main>
</div>

<footer class="-ml-px flex h-[45px] shrink-0 bg-[#24655c] text-white [&>*]:border-[#8db3ad]">
  <button class="flex w-[141px] items-center justify-center gap-1 border-r border-dashed pr-0.5 pb-0.5">Centimeters<svg class="h-1 w-1.5 rotate-180"><use href="#caret"/></svg></button>
  <button class="flex w-[193px] items-center border-r border-dashed pb-0.5 pl-[15px]"><svg class="mr-3 h-2 w-1"><use href="#right"/></svg>Check for Issues<svg class="-mt-0.5 mr-1.5 ml-4 h-4 w-4" viewBox="0 0 16 17"><circle cx="8" cy="7" r="7" fill="#4c83bd"/><path d="M5 13h6l-3 4z" fill="#4c83bd"/><path d="M7 3h2v2H7zM6 6h3v4h1v1H6v-1h1V7H6z" fill="#fff"/></svg>1</button>
  <span class="flex w-[78px] items-center justify-center border-r border-dashed pb-0.5">Table1</span>
  <span class="flex w-[297px] items-center border-r border-dashed pb-0.5 pl-[17px]">X:0.00 Y:0.40 Width:19.00 Height:12.00</span>
  <div class="ml-auto flex w-[141px] items-center gap-7 border-x border-dashed pb-0.5 pl-[17px]">
    <button aria-label="Fit width"><svg class="h-4 w-4" viewBox="0 0 16 16" fill="none" stroke="#fff"><path d="M.5.5h15v15H.5zM5 5.500h6M5 8h6M5 10.500h6"/><path d="M1 8l3-2.500v5zM15 8l-3-2.500v5z" fill="#fff" stroke="none"/></svg></button>
    <button aria-label="Fit page"><svg class="h-4 w-4" viewBox="0 0 16 16" fill="none" stroke="#fff"><path d="M.5.5h15v15H.5zM3 7h10M3 9h10"/><path d="M8 2l3 3.500H5zM8 14l3-3.500H5z" fill="#fff" stroke="none"/></svg></button>
    <button aria-label="Zoom 100%"><svg class="h-4 w-4" viewBox="0 0 16 16" fill="none" stroke="#fff"><path d="M.5.5h15v15H.5zM4.500 5v6M3 5.500h1.500M6.500 5.500h2v5h-2zM10.500 5.500h2v5h-2z"/></svg></button>
  </div>
  <button aria-label="Zoom out" class="ml-[21px]"><svg class="h-2 w-2" viewBox="0 0 8 8"><path d="M0 4h8" stroke="#fff" stroke-width="2"/></svg></button>
  <input type="range" aria-label="Zoom" min="0" max="100" value="47" class="mx-[25px] w-[125px] appearance-none bg-[linear-gradient(#fff,#fff)] bg-[length:100%_1px] bg-center bg-no-repeat [&::-webkit-slider-thumb]:h-[19px] [&::-webkit-slider-thumb]:w-1.5 [&::-webkit-slider-thumb]:appearance-none [&::-webkit-slider-thumb]:bg-white">
  <button aria-label="Zoom in"><svg class="h-2 w-2" viewBox="0 0 8 8"><path d="M0 4h8M4 0v8" stroke="#fff" stroke-width="2"/></svg></button>
  <span class="mr-4 ml-[29px] self-center pb-0.5">100%</span>
</footer>

<script>
  // Design grid: one line every 0.2 cm, every second one darker.
  const step = 9.84;
  let minor = '', major = '';
  for (let i = 1; i <= 95; i++) {
    const p = Math.round(i * step) - 0.5;
    const line = (p < 936 ? `M${p} 0v800` : '') + `M0 ${p}h936`;
    if (i % 2) minor += line; else major += line;
  }
  document.getElementById('minor').setAttribute('d', minor);
  document.getElementById('major').setAttribute('d', major);
</script>
</body>
</html>
